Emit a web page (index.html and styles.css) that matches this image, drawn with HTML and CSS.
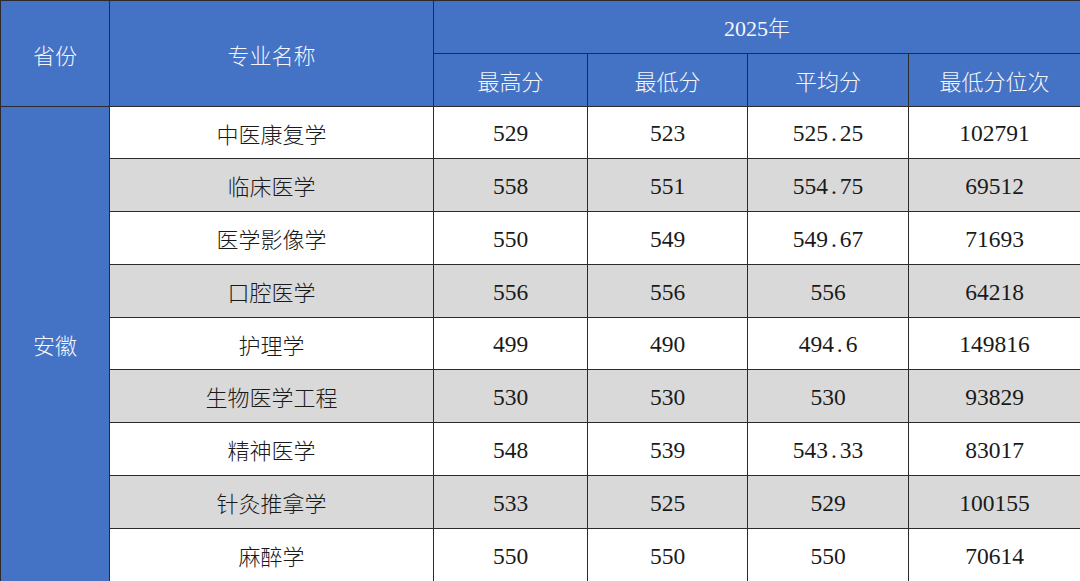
FILE: index.html
```html
<!DOCTYPE html>
<html lang="zh">
<head>
<meta charset="utf-8">
<link rel="stylesheet" href="styles.css">
</head>
<body>
<table class="score">
  <colgroup>
    <col class="c1"><col class="c2"><col class="c3"><col class="c4"><col class="c5"><col class="c6">
  </colgroup>
  <thead>
    <tr class="h1">
      <th rowspan="2">省份</th>
      <th rowspan="2">专业名称</th>
      <th colspan="4" class="year">2025年</th>
    </tr>
    <tr class="h2">
      <th>最高分</th><th>最低分</th><th>平均分</th><th>最低分位次</th>
    </tr>
  </thead>
  <tbody>
    <tr class="r52"><th rowspan="9" class="prov">安徽</th><td>中医康复学</td><td class="num">529</td><td class="num">523</td><td class="num">525<span class="dot">.</span>25</td><td class="num">102791</td></tr>
    <tr class="alt r53"><td>临床医学</td><td class="num">558</td><td class="num">551</td><td class="num">554<span class="dot">.</span>75</td><td class="num">69512</td></tr>
    <tr class="r53"><td>医学影像学</td><td class="num">550</td><td class="num">549</td><td class="num">549<span class="dot">.</span>67</td><td class="num">71693</td></tr>
    <tr class="alt r53"><td>口腔医学</td><td class="num">556</td><td class="num">556</td><td class="num">556</td><td class="num">64218</td></tr>
    <tr class="r52"><td>护理学</td><td class="num">499</td><td class="num">490</td><td class="num">494<span class="dot">.</span>6</td><td class="num">149816</td></tr>
    <tr class="alt r53"><td>生物医学工程</td><td class="num">530</td><td class="num">530</td><td class="num">530</td><td class="num">93829</td></tr>
    <tr class="r53"><td>精神医学</td><td class="num">548</td><td class="num">539</td><td class="num">543<span class="dot">.</span>33</td><td class="num">83017</td></tr>
    <tr class="alt r53"><td>针灸推拿学</td><td class="num">533</td><td class="num">525</td><td class="num">529</td><td class="num">100155</td></tr>
    <tr class="r53"><td>麻醉学</td><td class="num">550</td><td class="num">550</td><td class="num">550</td><td class="num">70614</td></tr>
  </tbody>
</table>
</body>
</html>
```
FILE: styles.css
```css
html, body {
  margin: 0;
  padding: 0;
  background: #ffffff;
}
.score {
  width: 1080px;
  border-collapse: collapse;
  table-layout: fixed;
  font-family: "Noto Sans CJK SC", "Noto Sans", sans-serif;
  font-size: 22px;
  color: #1a1a1a;
}
.c1 { width: 109px; }
.c2 { width: 324px; }
.c3 { width: 154px; }
.c4 { width: 160px; }
.c5 { width: 161px; }
.c6 { width: 172px; }
.score th, .score td {
  border: 1px solid #2b2b2b;
  padding: 0;
  text-align: center;
  vertical-align: middle;
  font-weight: 300;
  line-height: 1;
}
.score thead th, .score .prov {
  background: #4472c4;
  color: #f4f6fb;
}
.h1, .h2 { height: 53px; }
.r52 { height: 52px; }
.r53 { height: 53px; }
.alt td { background: #d9d9d9; }
.score .num {
  font-family: "Liberation Serif", "Noto Sans CJK SC", serif;
  font-size: 23.5px;
  font-weight: 400;
  padding-top: 3px;
}
.dot {
  display: inline-block;
  width: 0.5em;
  text-align: center;
}
.score .year {
  font-family: "Liberation Serif", "Noto Sans CJK SC", serif;
  padding-top: 4px;
}
```
